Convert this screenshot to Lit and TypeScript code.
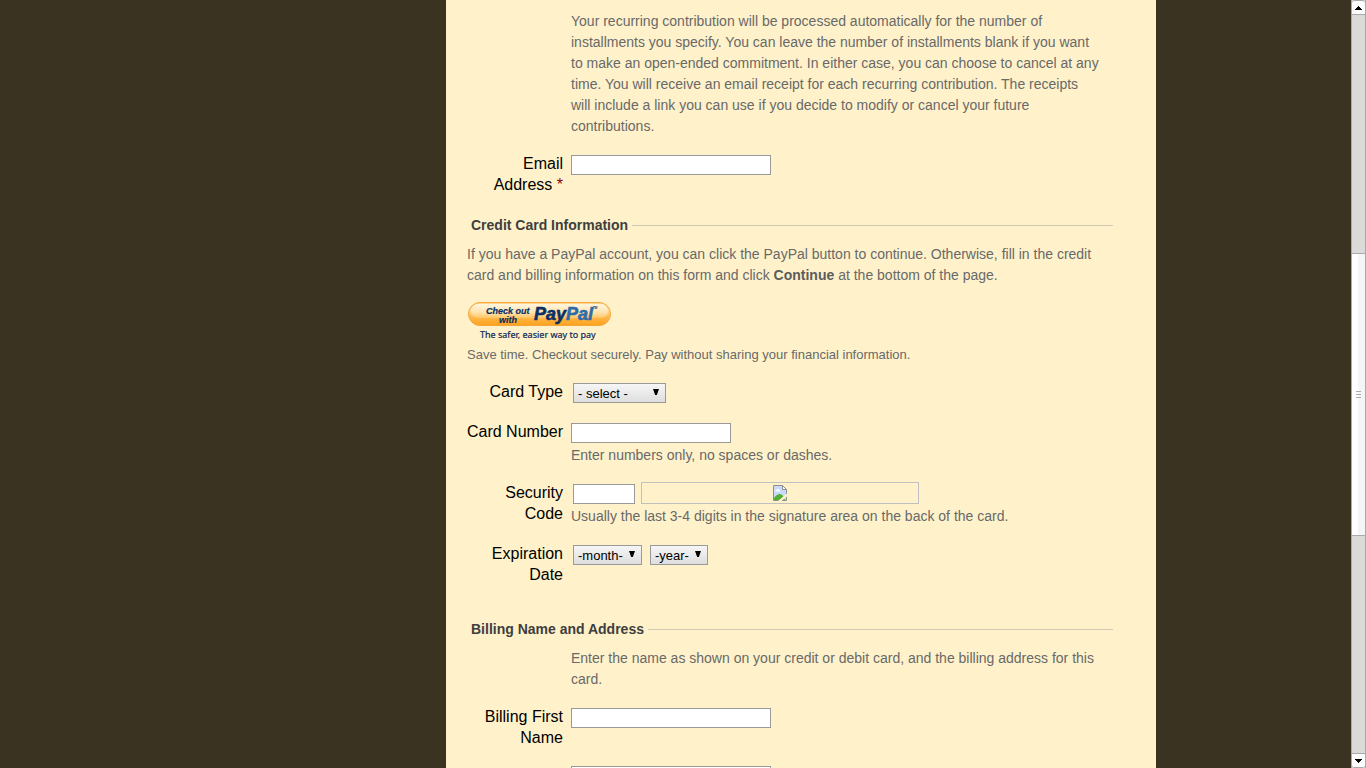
import { LitElement, html, css } from "lit";
import { customElement } from "lit/decorators.js";

@customElement("form-row")
class FormRow extends LitElement {
  static styles = css`
    :host {
      display: grid;
      grid-template-columns: 98px minmax(0, 1fr);
      column-gap: 8px;
      margin: 0 0 17px -2px;
    }
    :host([tight]) {
      margin-bottom: 16px;
    }
    .label {
      text-align: right;
      font-size: 16px;
      line-height: 21px;
      color: #000;
    }
  `;
  render() {
    return html`
      <div class="label"><slot name="label"></slot></div>
      <div><slot></slot></div>
    `;
  }
}

@customElement("window-scrollbar")
class WindowScrollbar extends LitElement {
  static styles = css`
    :host {
      display: flex;
      flex-direction: column;
      box-sizing: border-box;
      width: 15px;
      background: #dbdad9;
      border: solid #aaa;
      border-width: 0 1px;
    }
    .arrow {
      display: flex;
      align-items: center;
      justify-content: center;
      box-sizing: border-box;
      height: 15px;
      flex: none;
      padding: 0;
      border: 1px solid #aaa;
      border-width: 1px 0;
      border-radius: 3px 3px 0 0;
      background: #fdfdfc;
    }
    .arrow.down {
      border-radius: 0 0 3px 3px;
    }
    .before {
      flex: 238 0 0;
    }
    .after {
      flex: 217 0 0;
    }
    .thumb {
      flex: 281 0 0;
      box-sizing: border-box;
      display: flex;
      flex-direction: column;
      align-items: center;
      justify-content: center;
      gap: 2px;
      border: 1px solid #aaa;
      border-width: 1px 0;
      background: linear-gradient(90deg, #fff 50%, #f5f5f5 50%);
    }
    .grip {
      width: 5px;
      height: 1px;
      background: #aaa;
    }
  `;
  render() {
    return html`
      <button class="arrow up" aria-label="Scroll up">
        <svg width="7" height="4" viewBox="0 0 7 4" shape-rendering="crispEdges">
          <path d="M3 0h1v1h1v1h1v1h1v1H0V3h1V2h1V1h1z" />
        </svg>
      </button>
      <div class="before"></div>
      <div class="thumb">
        <div class="grip"></div>
        <div class="grip"></div>
        <div class="grip"></div>
      </div>
      <div class="after"></div>
      <button class="arrow down" aria-label="Scroll down">
        <svg width="7" height="4" viewBox="0 0 7 4" shape-rendering="crispEdges">
          <path d="M0 0h7v1H6v1H5v1H4v1H3V3H2V2H1V1H0z" />
        </svg>
      </button>
    `;
  }
}

@customElement("app-root")
class AppRoot extends LitElement {
  static styles = css`
    :host {
      display: flex;
      height: 100vh;
      overflow: hidden;
      background: #3a3322;
      font-family: "Liberation Sans", Arial, sans-serif;
      font-size: 14px;
      line-height: 21px;
      color: #696969;
    }
    .view {
      flex: 1;
      min-width: 0;
      overflow: hidden;
      display: flex;
      justify-content: center;
    }
    .wrapper {
      width: 100%;
      max-width: 961px;
      display: flex;
      justify-content: flex-end;
    }
    .panel {
      box-sizing: border-box;
      width: 100%;
      max-width: 710px;
      min-height: 100vh;
      height: max-content;
      padding: 11px 43px 0 21px;
      background: #fff2ca;
    }
    p {
      margin: 0;
    }
    .note {
      max-width: 529px;
    }
    .star {
      color: #8b0000;
    }
    fieldset {
      margin: 0;
      padding: 0;
      border: 0;
      min-width: 0;
    }
    legend {
      display: flex;
      align-items: center;
      gap: 4px;
      box-sizing: border-box;
      width: 100%;
      padding: 0 0 0 4px;
      margin-bottom: 8px;
      font-weight: bold;
      color: #3e3e3e;
    }
    legend::after {
      content: "";
      flex: 1;
      height: 1px;
      background: #d0cab4;
    }
    .card {
      margin-top: 20px;
    }
    .billing {
      margin-top: 17px;
    }
    b {
      color: #5c5c5c;
    }
    input {
      display: block;
      box-sizing: border-box;
      height: 20px;
      width: 200px;
      margin: 2px 0 0;
      padding: 1px 3px;
      border: 1px solid #999;
      border-radius: 0;
      background: #fff;
      font: 13px "Liberation Sans", Arial, sans-serif;
    }
    .number {
      width: 160px;
    }
    .code {
      width: 62px;
    }
    .line {
      display: flex;
      gap: 8px;
      padding-left: 2px;
    }
    .security {
      gap: 6px;
    }
    .missing {
      box-sizing: border-box;
      width: 278px;
      height: 22px;
      display: flex;
      align-items: center;
      justify-content: center;
      border: 1px solid #c0c0c0;
    }
    .help {
      margin: 2px 0 -1px;
    }
    .pick {
      display: grid;
      align-items: center;
      margin: 2px 0 1px;
      height: 20px;
    }
    .pick select,
    .pick svg {
      grid-area: 1 / 1;
    }
    .pick svg {
      justify-self: end;
      margin: 0 7px 2px 0;
      pointer-events: none;
    }
    select {
      appearance: none;
      box-sizing: border-box;
      height: 20px;
      margin: 0;
      padding: 1px 4px 0;
      border: 1px solid #999;
      border-radius: 0;
      background: linear-gradient(#f6f6f6, #dedede);
      color: #000;
      font: 13px "Liberation Sans", Arial, sans-serif;
    }
    .type {
      width: 93px;
    }
    .month {
      width: 69px;
    }
    .year {
      width: 58px;
    }
    .paypal {
      display: block;
      margin: 15px 0 0;
      padding: 0;
      border: 0;
      background: none;
      cursor: pointer;
    }
    .paypal svg {
      display: block;
    }
    .save {
      margin-bottom: 16px;
      font-size: 13px;
    }
  `;

  private select(id: string, label: string, text: string) {
    return html`<span class="pick">
      <select id=${id} class=${id} aria-label=${label}>
        <option>${text}</option>
      </select>
      <svg width="6" height="6" viewBox="0 0 6 6"><path d="M0 0h6L3.800 6H2.200z" /></svg>
    </span>`;
  }

  render() {
    return html`
      <main class="view">
        <div class="wrapper">
          <form class="panel">
            <form-row tight>
              <p class="note">
                Your recurring contribution will be processed automatically for the number of
                installments you specify. You can leave the number of installments blank if you want
                to make an open-ended commitment. In either case, you can choose to cancel at any
                time. You will receive an email receipt for each recurring contribution. The receipts
                will include a link you can use if you decide to modify or cancel your future
                contributions.
              </p>
            </form-row>
            <form-row>
              <label slot="label" for="email">Email Address <span class="star">*</span></label>
              <input id="email" type="text" />
            </form-row>

            <fieldset class="card">
              <legend>Credit Card Information</legend>
              <p>
                If you have a PayPal account, you can click the PayPal button to continue. Otherwise,
                fill in the credit card and billing information on this form and click
                <b>Continue</b> at the bottom of the page.
              </p>
              <button class="paypal" type="button">
                <svg width="145" height="43" viewBox="0 0 145 43" font-family="Liberation Sans, Arial, sans-serif">
                  <defs>
                    <linearGradient id="gold" x1="0" y1="0" x2="0" y2="1">
                      <stop offset="0" stop-color="#ffd58a" />
                      <stop offset="0.35" stop-color="#ffdc98" />
                      <stop offset="0.65" stop-color="#ffb747" />
                      <stop offset="1" stop-color="#ffa21c" />
                    </linearGradient>
                    <linearGradient id="shine" x1="0" y1="0" x2="0" y2="1">
                      <stop offset="0" stop-color="#fff6de" />
                      <stop offset="0.6" stop-color="#ffe3ac" />
                      <stop offset="1" stop-color="#ffc566" />
                    </linearGradient>
                  </defs>
                  <rect x="1.500" y="1.500" width="142" height="23" rx="11.500" fill="url(#gold)" stroke="#f5a63a" />
                  <rect x="4" y="3" width="137" height="14" rx="7" fill="url(#shine)" />
                  <g font-weight="bold" font-style="italic" fill="#0b2f66">
                    <g stroke="#0b2f66" stroke-width="0.2">
                      <text x="19" y="13" font-size="9">Check out</text>
                      <text x="32" y="22" font-size="9">with</text>
                    </g>
                    <text x="67" y="19" font-size="18" stroke="#0b2f66" stroke-width="0.6">Pay<tspan fill="#2f6ba8" stroke="#2f6ba8">Pal</tspan></text>
                    <text x="126" y="8" font-size="3">TM</text>
                  </g>
                  <text x="13" y="37" font-size="9" font-family="Noto Sans, sans-serif" fill="#0b2a58" stroke="#0b2a58" stroke-width="0.2">The safer, easier way to pay</text>
                </svg>
              </button>
              <p class="save">
                Save time. Checkout securely. Pay without sharing your financial information.
              </p>
              <form-row>
                <label slot="label" for="type">Card Type</label>
                <div class="line">${this.select("type", "Card Type", "- select -")}</div>
              </form-row>
              <form-row>
                <label slot="label" for="number">Card Number</label>
                <input id="number" class="number" type="text" />
                <p class="help">Enter numbers only, no spaces or dashes.</p>
              </form-row>
              <form-row>
                <label slot="label" for="code">Security Code</label>
                <div class="line security">
                  <input id="code" class="code" type="text" />
                  <span class="missing">
                    <svg width="16" height="16" viewBox="0 0 16 16">
                      <path d="M1.500.500h9l4 4v11h-13z" fill="#c9dbf8" stroke="#8f8f8f" />
                      <path d="M3 6.500q0-1.500 1.500-1.500Q5 3.500 6.500 4T8 6.500z" fill="#fff" />
                      <path d="M2 15v-2q3-4 6-4t5 6z" fill="#55ae35" />
                      <path d="M10.500.500v4h4z" fill="#fff" stroke="#8f8f8f" />
                      <path d="M6 16 15.500 8v3L9.500 16z" fill="#fff2ca" />
                    </svg>
                  </span>
                </div>
                <p class="help">
                  Usually the last 3-4 digits in the signature area on the back of the card.
                </p>
              </form-row>
              <form-row>
                <label slot="label" for="month">Expiration Date</label>
                <div class="line">
                  ${this.select("month", "Expiration month", "-month-")}
                  ${this.select("year", "Expiration year", "-year-")}
                </div>
              </form-row>
            </fieldset>

            <fieldset class="billing">
              <legend>Billing Name and Address</legend>
              <form-row tight>
                <p class="note">
                  Enter the name as shown on your credit or debit card, and the billing address for
                  this card.
                </p>
              </form-row>
              <form-row tight>
                <label slot="label" for="first">Billing First Name</label>
                <input id="first" type="text" />
              </form-row>
              <form-row>
                <input type="text" aria-label="Billing Middle Name" />
              </form-row>
            </fieldset>
          </form>
        </div>
      </main>
      <window-scrollbar></window-scrollbar>
    `;
  }
}
